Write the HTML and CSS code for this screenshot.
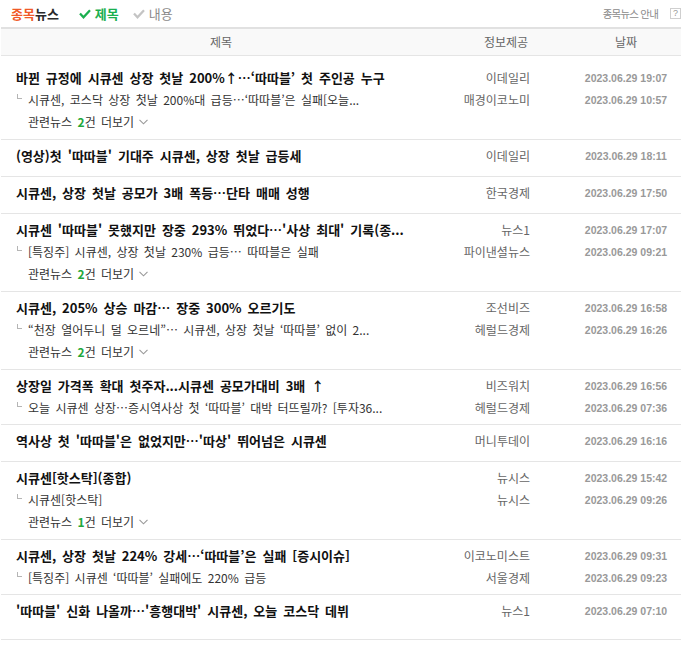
FILE: index.html
```html
<!DOCTYPE html>
<html lang="ko">
<head>
<meta charset="utf-8">
<title>종목뉴스</title>
<link rel="stylesheet" href="styles.css">
</head>
<body>
<div class="wrap">
  <div class="topbar">
    <span class="brand"><span class="accent">종목</span>뉴스</span>
    <span class="tab on"><svg width="12" height="10" viewBox="0 0 12 10"><path d="M1 4.5 L4.5 8.2 L11 1.2" fill="none" stroke="#1aaf4f" stroke-width="2.3"/></svg>제목</span>
    <span class="tab"><svg width="12" height="10" viewBox="0 0 12 10"><path d="M1 4.5 L4.5 8.2 L11 1.2" fill="none" stroke="#c4c4c4" stroke-width="2.3"/></svg>내용</span>
    <span class="guide">종목뉴스 안내<span class="qmark">?</span></span>
  </div>

  <div class="thead"><span>제목</span><span>정보제공</span><span>날짜</span></div>

  <div class="row first more">
    <div class="line"><span class="title">바뀐 규정에 시큐센 상장 첫날 200%↑…‘따따블’ 첫 주인공 누구</span><span class="info">이데일리</span><span class="date">2023.06.29 19:07</span></div>
    <div class="line"><span class="sub"><i class="corner"></i>시큐센, 코스닥 상장 첫날 200%대 급등…‘따따블’은 실패[오늘...</span><span class="info">매경이코노미</span><span class="date">2023.06.29 10:57</span></div>
    <div class="related">관련뉴스 <b class="num">2</b>건 더보기<svg class="chev" width="9" height="6" viewBox="0 0 9 6"><path d="M0.5 0.8 L4.5 4.8 L8.5 0.8" fill="none" stroke="#999" stroke-width="1.1"/></svg></div>
  </div>

  <div class="row">
    <div class="line"><span class="title">(영상)첫 '따따블' 기대주 시큐센, 상장 첫날 급등세</span><span class="info">이데일리</span><span class="date">2023.06.29 18:11</span></div>
  </div>

  <div class="row">
    <div class="line"><span class="title">시큐센, 상장 첫날 공모가 3배 폭등…단타 매매 성행</span><span class="info">한국경제</span><span class="date">2023.06.29 17:50</span></div>
  </div>

  <div class="row more">
    <div class="line"><span class="title">시큐센 '따따블' 못했지만 장중 293% 뛰었다…'사상 최대' 기록(종...</span><span class="info">뉴스1</span><span class="date">2023.06.29 17:07</span></div>
    <div class="line"><span class="sub"><i class="corner"></i>[특징주] 시큐센, 상장 첫날 230% 급등… 따따블은 실패</span><span class="info">파이낸셜뉴스</span><span class="date">2023.06.29 09:21</span></div>
    <div class="related">관련뉴스 <b class="num">2</b>건 더보기<svg class="chev" width="9" height="6" viewBox="0 0 9 6"><path d="M0.5 0.8 L4.5 4.8 L8.5 0.8" fill="none" stroke="#999" stroke-width="1.1"/></svg></div>
  </div>

  <div class="row more">
    <div class="line"><span class="title">시큐센, 205% 상승 마감… 장중 300% 오르기도</span><span class="info">조선비즈</span><span class="date">2023.06.29 16:58</span></div>
    <div class="line"><span class="sub"><i class="corner"></i>“천장 열어두니 덜 오르네”… 시큐센, 상장 첫날 ‘따따블’ 없이 2...</span><span class="info">헤럴드경제</span><span class="date">2023.06.29 16:26</span></div>
    <div class="related">관련뉴스 <b class="num">2</b>건 더보기<svg class="chev" width="9" height="6" viewBox="0 0 9 6"><path d="M0.5 0.8 L4.5 4.8 L8.5 0.8" fill="none" stroke="#999" stroke-width="1.1"/></svg></div>
  </div>

  <div class="row sub-only">
    <div class="line"><span class="title">상장일 가격폭 확대 첫주자...시큐센 공모가대비 3배 ↑</span><span class="info">비즈워치</span><span class="date">2023.06.29 16:56</span></div>
    <div class="line"><span class="sub"><i class="corner"></i>오늘 시큐센 상장…증시역사상 첫 ‘따따블’ 대박 터뜨릴까? [투자36...</span><span class="info">헤럴드경제</span><span class="date">2023.06.29 07:36</span></div>
  </div>

  <div class="row">
    <div class="line"><span class="title">역사상 첫 '따따블'은 없었지만…'따상' 뛰어넘은 시큐센</span><span class="info">머니투데이</span><span class="date">2023.06.29 16:16</span></div>
  </div>

  <div class="row more">
    <div class="line"><span class="title">시큐센[핫스탁](종합)</span><span class="info">뉴시스</span><span class="date">2023.06.29 15:42</span></div>
    <div class="line"><span class="sub"><i class="corner"></i>시큐센[핫스탁]</span><span class="info">뉴시스</span><span class="date">2023.06.29 09:26</span></div>
    <div class="related">관련뉴스 <b class="num">1</b>건 더보기<svg class="chev" width="9" height="6" viewBox="0 0 9 6"><path d="M0.5 0.8 L4.5 4.8 L8.5 0.8" fill="none" stroke="#999" stroke-width="1.1"/></svg></div>
  </div>

  <div class="row sub-only">
    <div class="line"><span class="title">시큐센, 상장 첫날 224% 강세…‘따따블’은 실패 [증시이슈]</span><span class="info">이코노미스트</span><span class="date">2023.06.29 09:31</span></div>
    <div class="line"><span class="sub"><i class="corner"></i>[특징주] 시큐센 ‘따따블’ 실패에도 220% 급등</span><span class="info">서울경제</span><span class="date">2023.06.29 09:23</span></div>
  </div>

  <div class="row last">
    <div class="line"><span class="title">'따따블' 신화 나올까…'흥행대박' 시큐센, 오늘 코스닥 데뷔</span><span class="info">뉴스1</span><span class="date">2023.06.29 07:10</span></div>
  </div>
</div>
</body>
</html>
```

FILE: styles.css
```css
* { box-sizing: border-box; }
html, body { margin: 0; padding: 0; background: #fff; }
body {
  font-family: "Noto Sans CJK KR", "Noto Sans", sans-serif;
  font-size: 12px;
  color: #333;
}
.wrap { width: 680px; margin-left: 1px; }

.topbar {
  display: flex;
  align-items: center;
  height: 27px;
  padding-left: 10px;
}
.brand { font-size: 13px; font-weight: bold; color: #2a2a2a; margin-right: 20px; }
.brand .accent { color: #f05a28; }
.tab { display: flex; align-items: center; font-size: 13px; color: #8a8a8a; margin-right: 14px; }
.tab svg { margin-right: 4px; }
.tab.on { color: #1aaf4f; font-weight: bold; }
.guide {
  margin-left: auto;
  display: flex;
  align-items: center;
  color: #8a8a8a;
  font-size: 10.5px;
  letter-spacing: -0.8px;
}
.qmark {
  display: inline-block;
  width: 11px;
  height: 11px;
  margin-left: 12px;
  border: 1px solid #cfcfcf;
  font-family: "Liberation Sans", sans-serif;
  font-size: 9px;
  line-height: 9px;
  letter-spacing: 0;
  text-align: center;
  color: #999;
}

.thead {
  display: grid;
  grid-template-columns: 440px 130px 110px;
  height: 29px;
  border-top: 2px solid #e1e1e1;
  border-bottom: 1px solid #e5e5e5;
  background: #f9f9f9;
  color: #666;
  font-size: 12px;
  line-height: 26px;
  text-align: center;
}

.row { border-bottom: 1px solid #e5e5e5; padding: 5px 0 9px; }
.row.sub-only { padding-bottom: 5px; }
.row.more { padding-bottom: 6px; }
.row.first { padding-top: 11px; }
.row.last { padding-bottom: 17px; }

.line {
  display: grid;
  grid-template-columns: 440px 130px 110px;
  height: 22px;
  line-height: 22px;
}
.title, .sub {
  padding-left: 15px;
  white-space: nowrap;
  overflow: hidden;
}
.title { font-size: 13px; font-weight: bold; color: #111; word-spacing: 2.3px; }
.sub { font-size: 12px; color: #333; word-spacing: 2px; }
.corner {
  display: inline-block;
  width: 5px;
  height: 5px;
  margin-left: 1px;
  margin-right: 6px;
  border-left: 1px solid #b5b5b5;
  border-bottom: 1px solid #b5b5b5;
  vertical-align: 6px;
}
.info { text-align: right; padding-right: 41px; color: #666; font-size: 12px; white-space: nowrap; }
.date {
  text-align: center;
  font-family: "Liberation Sans", sans-serif;
  font-size: 10.5px;
  font-weight: bold;
  color: #999;
  white-space: nowrap;
}

.related {
  height: 22px;
  line-height: 22px;
  padding-left: 27px;
  font-size: 12px;
  color: #333;
  word-spacing: 2px;
}
.related .num { color: #22a83a; font-weight: bold; }
.chev { margin-left: 5px; vertical-align: 2px; }
```
